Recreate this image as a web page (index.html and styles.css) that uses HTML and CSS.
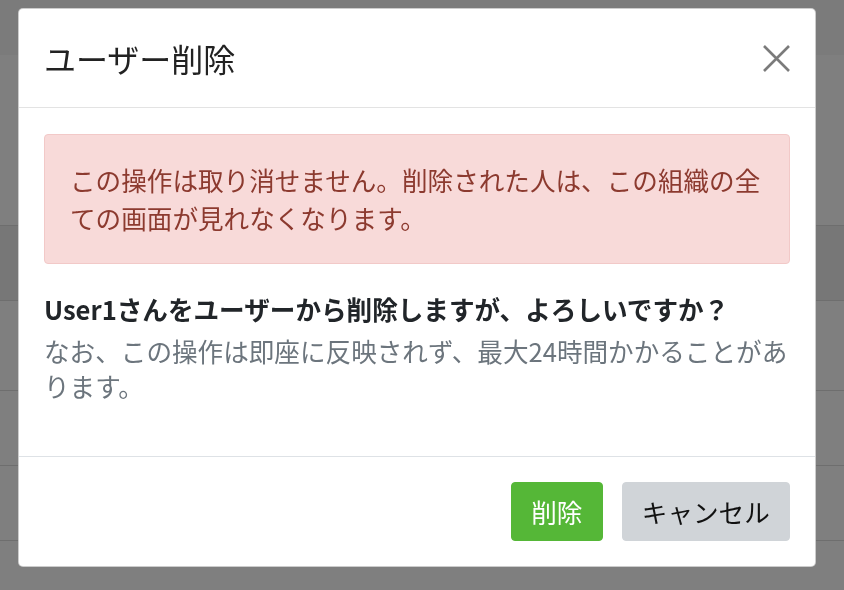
FILE: index.html
```html
<!DOCTYPE html>
<html lang="ja">
<head>
    <meta charset="UTF-8">
    <meta name="viewport" content="width=device-width, initial-scale=1.0">
    <title>ユーザー削除</title>
    <link rel="stylesheet" href="styles.css">
</head>
<body>
    <!-- page behind the dialog -->
    <div class="page">
        <div class="page-header"></div>
        <div class="page-toolbar"></div>
        <div class="row row-active"></div>
        <div class="row row-tall"></div>
        <div class="row"></div>
        <div class="row"></div>
        <div class="row"></div>
    </div>

    <div class="backdrop">
        <div class="modal">
            <div class="modal-header">
                <h5 class="modal-title">ユーザー削除</h5>
                <button class="close" aria-label="閉じる">
                    <svg width="27" height="27" viewBox="0 0 27 27">
                        <path d="M1 1 L26 26 M26 1 L1 26" stroke="#7b7b7b" stroke-width="2.6" fill="none"/>
                    </svg>
                </button>
            </div>
            <div class="modal-body">
                <div class="alert">この操作は取り消せません。削除された人は、この組織の全ての画面が見れなくなります。</div>
                <p class="confirm">User1さんをユーザーから削除しますが、よろしいですか？</p>
                <p class="note">なお、この操作は即座に反映されず、最大24時間かかることがあります。</p>
            </div>
            <div class="modal-footer">
                <button class="btn btn-delete">削除</button>
                <button class="btn btn-cancel">キャンセル</button>
            </div>
        </div>
    </div>
</body>
</html>
```

FILE: styles.css
```css
body {
    margin: 0;
    font-family: "Noto Sans CJK JP", "Noto Sans", sans-serif;
    background-color: #fff;
    color: #212529;
    overflow: hidden;
}

.page-header {
    height: 55px;
    background-color: #f6f6f6;
}

.page-toolbar {
    height: 170px;
    border-bottom: 1px solid #dcdcdc;
}

.row {
    height: 74px;
    border-bottom: 1px solid #dcdcdc;
}

.row-active {
    background-color: #eeeeee;
}

.row-tall {
    height: 89px;
}

.backdrop {
    position: fixed;
    inset: 0;
    background-color: rgba(0, 0, 0, 0.5);
    padding: 8px 0 0 18px;
}

.modal {
    width: 798px;
    box-sizing: border-box;
    background: white;
    border: 1px solid rgba(0, 0, 0, 0.2);
    border-radius: 5px;
}

.modal-header {
    display: flex;
    justify-content: space-between;
    align-items: center;
    padding: 25px;
    border-bottom: 1px solid #e3e3e3;
}

.modal-title {
    margin: 0;
    font-size: 32px;
    font-weight: normal;
    line-height: 48px;
    color: #222;
}

.close {
    border: none;
    background: none;
    padding: 0;
    width: 27px;
    height: 27px;
    display: flex;
    cursor: pointer;
}

.modal-body {
    padding: 26px 25px 26px;
    font-size: 25.6px;
}

.alert {
    background-color: #f8dad9;
    border: 1px solid #f2c9c8;
    border-radius: 4px;
    color: #8c3a2f;
    padding: 26px 25px;
    line-height: 38px;
    margin-bottom: 26px;
}

.confirm {
    margin: 0;
    font-weight: bold;
    line-height: 38px;
    color: #212529;
}

.note {
    margin: 5px 0 27px;
    line-height: 35px;
    color: #6c757d;
}

.modal-footer {
    display: flex;
    justify-content: flex-end;
    gap: 19px;
    padding: 25px;
    border-top: 1px solid #dee2e6;
}

.btn {
    font-family: inherit;
    font-size: 25.6px;
    line-height: 38px;
    padding: 9.5px 19.2px;
    border: 1px solid transparent;
    border-radius: 4px;
    cursor: pointer;
}

.btn-delete {
    background-color: #55b737;
    border-color: #55b737;
    color: white;
}

.btn-cancel {
    background-color: #d0d4d8;
    border-color: #d0d4d8;
    color: #111;
}
```
